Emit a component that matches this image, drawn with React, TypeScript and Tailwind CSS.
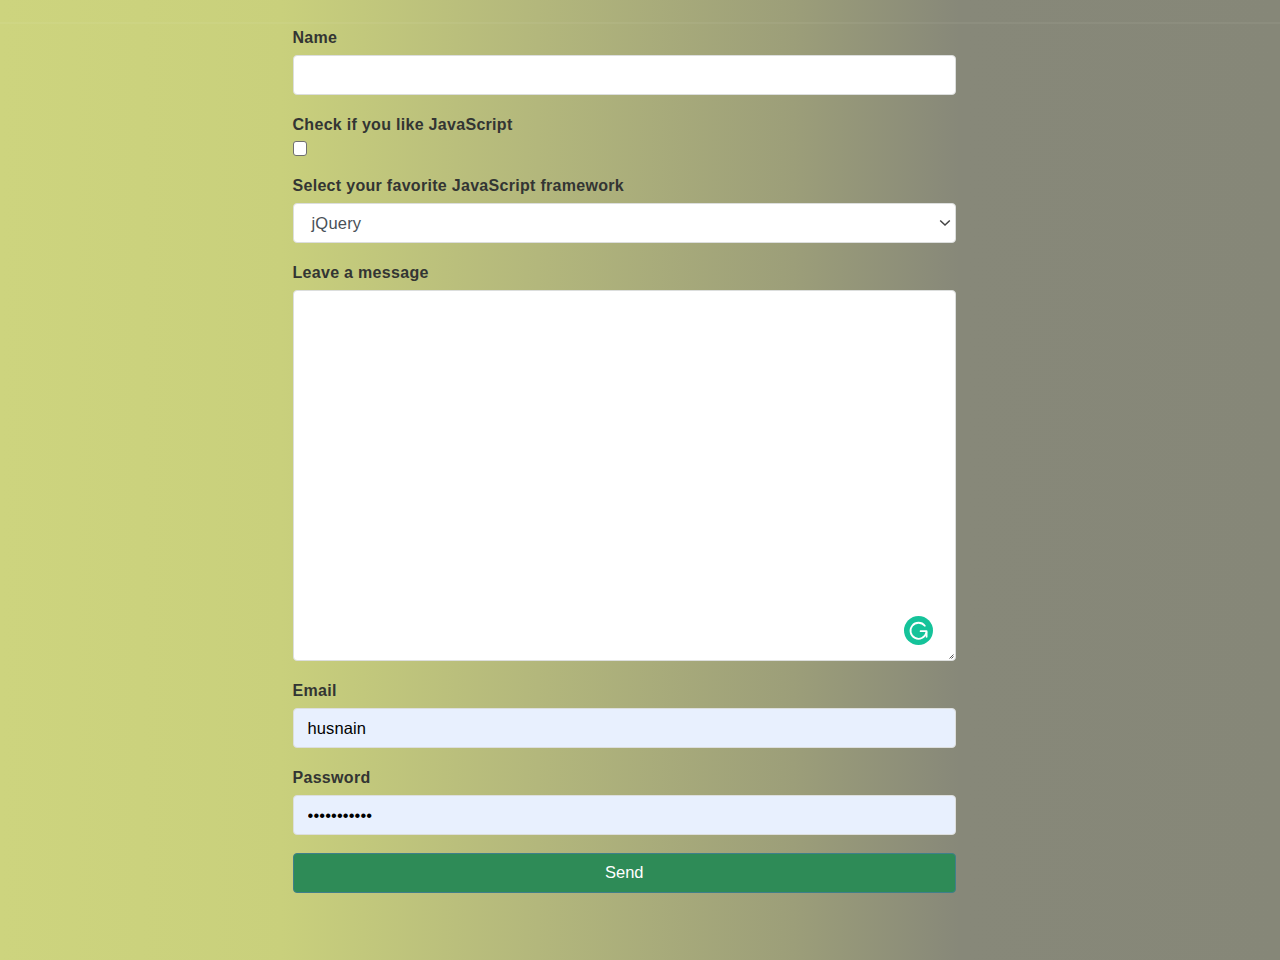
import React from 'react';

const labelCls = 'block pt-px text-[16px] leading-6 font-bold tracking-[0.3px] text-[#333533] mb-[5px]';
const inputCls = 'block w-full h-10 rounded-[4px] border border-[#dcdedd] px-[14px] text-[16.5px] tracking-[0.1px] text-black outline-none';

const GrammarlyIcon = () => (
  <svg width="29" height="29" viewBox="0 0 29 29" className="absolute right-[22.5px] bottom-[15px]">
    <circle cx="14.5" cy="14.5" r="14.5" fill="#15c39a" />
    <path d="M20.8 9.8a8 8 0 1 0 1.5 6.8" fill="none" stroke="#fff" strokeWidth="1.8" strokeLinecap="round" />
    <path d="M16.6 15.2h6v5.6" fill="none" stroke="#fff" strokeWidth="1.8" strokeLinecap="round" strokeLinejoin="round" />
  </svg>
);

export default function App() {
  return (
    <div className="min-h-[960px] font-['Liberation_Sans',Arial,sans-serif] bg-[linear-gradient(90deg,#cdd47e_0%,#c9d07c_22%,#b3b77c_42%,#9c9e79_62%,#878879_75%,#868778_100%)]">
      <div className="h-[24px] border-b-2 border-[#ffffff0d]" />
      <form className="w-[663.5px] ml-[292.5px] pt-px">
        <div className="mb-[17px]">
          <label className={labelCls}>Name</label>
          <input type="text" className={`${inputCls} bg-white`} />
        </div>
        <div className="mb-[17px]">
          <label className="block pt-px text-[16px] leading-6 font-bold tracking-[0.3px] text-[#333533] mb-[4px]">Check if you like JavaScript</label>
          <input type="checkbox" className="block w-[14px] h-[15px] appearance-none rounded-[3px] border border-[#6f6f6f] bg-white" />
        </div>
        <div className="mb-[17px]">
          <label className={labelCls}>Select your favorite JavaScript framework</label>
          <div className="relative h-10 rounded-[4px] border border-[#dcdedd] bg-white pl-[18px] flex items-center text-[16.5px] tracking-[0.2px] text-[#495057]">
            jQuery
            <svg width="12" height="8" viewBox="0 0 12 8" className="absolute right-[4px] top-[15px]">
              <path d="M1.2 1.5 6 6l4.8-4.5" fill="none" stroke="#444" strokeWidth="1.5" />
            </svg>
          </div>
        </div>
        <div className="mb-[17px]">
          <label className={labelCls}>Leave a message</label>
          <div className="relative h-[371px] rounded-[4px] border border-[#dcdedd] bg-white">
            <GrammarlyIcon />
            <svg width="5" height="5" viewBox="0 0 5 5" className="absolute right-[1px] bottom-[1px]">
              <path d="M0.5 4.5 4.5 0.5M2.5 4.5l2-2" stroke="#555" strokeWidth="1" fill="none" />
            </svg>
          </div>
        </div>
        <div className="mb-[17px]">
          <label className={labelCls}>Email</label>
          <input type="text" defaultValue="husnain" className={`${inputCls} bg-[#e8f0fe]`} />
        </div>
        <div className="mb-[18px]">
          <label className={labelCls}>Password</label>
          <input type="password" defaultValue="husnain1234" className={`${inputCls} bg-[#e8f0fe]`} />
        </div>
        <button type="button" className="block w-full h-10 pb-[2px] rounded-[4px] border border-[#3f7f8a] bg-[#2e8b57] text-white text-[16.5px]">
          Send
        </button>
      </form>
    </div>
  );
}
